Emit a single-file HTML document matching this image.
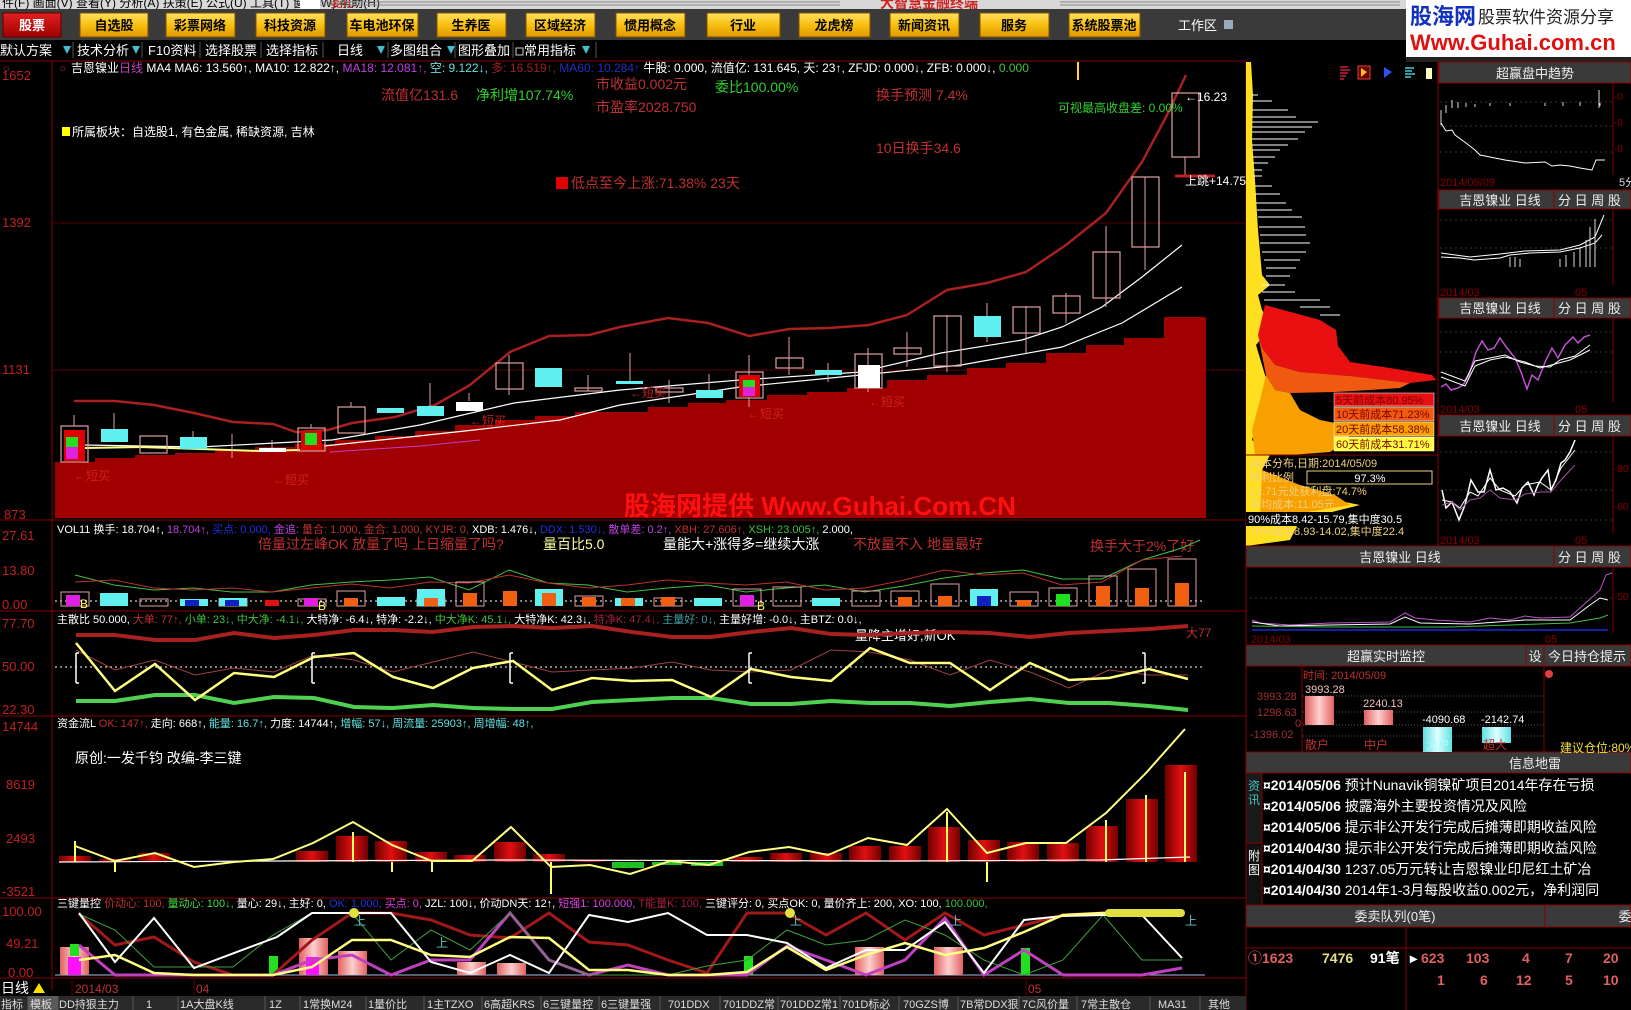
<!DOCTYPE html>
<html><head><meta charset="utf-8"><style>
html,body{margin:0;padding:0;background:#000;width:1631px;height:1010px;overflow:hidden}
svg{display:block}
text{font-family:"Liberation Sans","Noto Sans CJK SC",sans-serif}
.s{font-size:12px}
.m{font-size:13px}
</style></head><body>
<svg width="1631" height="1010" viewBox="0 0 1631 1010" xmlns="http://www.w3.org/2000/svg">
<defs>
<linearGradient id="yb" x1="0" y1="0" x2="0" y2="1"><stop offset="0" stop-color="#ffe060"/><stop offset="0.5" stop-color="#f8c010"/><stop offset="1" stop-color="#e09800"/></linearGradient>
<linearGradient id="rb" x1="0" y1="0" x2="0" y2="1"><stop offset="0" stop-color="#e02020"/><stop offset="1" stop-color="#a00000"/></linearGradient>
<linearGradient id="pk" x1="0" y1="0" x2="1" y2="0"><stop offset="0" stop-color="#e06060"/><stop offset="0.5" stop-color="#ffd0d0"/><stop offset="1" stop-color="#e06060"/></linearGradient>
<linearGradient id="rbar" x1="0" y1="0" x2="1" y2="0"><stop offset="0" stop-color="#700000"/><stop offset="0.5" stop-color="#e01010"/><stop offset="1" stop-color="#700000"/></linearGradient>
<linearGradient id="cy" x1="0" y1="0" x2="1" y2="0"><stop offset="0" stop-color="#60e0e0"/><stop offset="0.5" stop-color="#e0ffff"/><stop offset="1" stop-color="#60e0e0"/></linearGradient>
</defs>
<rect width="1631" height="1010" fill="#000"/>
<!-- top menu -->
<rect x="0" y="0" width="1631" height="9" fill="#d8d8d8"/>
<text x="2" y="7" class="s" fill="#000">件(F)  画面(V)  查看(Y)  分析(A)  扶策(E)  公式(U)  工具(T)  窗口(W)  帮助(H)</text>
<rect x="300" y="0" width="20" height="9" fill="#fff"/>
<text x="330" y="7" class="s" fill="#c00">委托</text>
<g stroke="#888" stroke-width="1"><line x1="320" y1="2" x2="840" y2="2"/><line x1="320" y1="5" x2="840" y2="5"/><line x1="1060" y1="2" x2="1400" y2="2"/><line x1="1060" y1="5" x2="1400" y2="5"/></g>
<text x="880" y="8" font-size="14" fill="#d02020" font-weight="bold">大智慧金融终端</text>
<!-- buttons row -->
<rect x="0" y="9" width="1631" height="31" fill="#3a3a3a"/>
<rect x="3" y="13" width="58" height="24" fill="url(#rb)" stroke="#600" />
<text x="32" y="30" text-anchor="middle" class="m" fill="#fff" font-weight="bold">股票</text>
<g fill="url(#yb)" stroke="#805000">
<rect x="80" y="13" width="68" height="24"/><rect x="166" y="13" width="69" height="24"/><rect x="256" y="13" width="69" height="24"/><rect x="347" y="13" width="71" height="24"/><rect x="437" y="13" width="69" height="24"/><rect x="526" y="13" width="69" height="24"/><rect x="616" y="13" width="69" height="24"/><rect x="707" y="13" width="73" height="24"/><rect x="799" y="13" width="71" height="24"/><rect x="890" y="13" width="69" height="24"/><rect x="980" y="13" width="69" height="24"/><rect x="1069" y="13" width="71" height="24"/>
</g>
<g class="m" fill="#000" font-weight="bold" text-anchor="middle">
<text x="114" y="30">自选股</text><text x="200" y="30">彩票网络</text><text x="290" y="30">科技资源</text><text x="382" y="30">车电池环保</text><text x="471" y="30">生养医</text><text x="560" y="30">区域经济</text><text x="650" y="30">惯用概念</text><text x="743" y="30">行业</text><text x="834" y="30">龙虎榜</text><text x="924" y="30">新闻资讯</text><text x="1014" y="30">服务</text><text x="1104" y="30">系统股票池</text>
</g>
<text x="1178" y="30" class="m" fill="#fff">工作区</text>
<rect x="1224" y="20" width="9" height="9" fill="#9ab"/>
<!-- logo -->
<rect x="1406" y="0" width="225" height="57" fill="#fff"/>
<text x="1410" y="24" font-size="22" font-weight="bold" fill="#1030c0">股海网</text>
<text x="1478" y="23" font-size="17" fill="#222">股票软件资源分享</text>
<text x="1410" y="50" font-size="22" font-weight="bold" fill="#e01010">Www.Guhai.com.cn</text>
<!-- toolbar -->
<rect x="0" y="40" width="1406" height="20" fill="#000"/>
<g class="m" fill="#fff">
<text x="0" y="55">默认方案</text><text x="77" y="55">技术分析</text><text x="148" y="55">F10资料</text><text x="205" y="55">选择股票</text><text x="266" y="55">选择指标</text><text x="337" y="55">日线</text><text x="390" y="55">多图组合</text><text x="458" y="55">图形叠加</text><text x="524" y="55">常用指标</text>
</g>
<g fill="#40c0d0"><path d="M63 46h8l-4 8z"/><path d="M132 46h8l-4 8z"/><path d="M377 46h8l-4 8z"/><path d="M447 46h8l-4 8z"/><path d="M582 46h8l-4 8z"/></g>
<g stroke="#555"><line x1="73" y1="42" x2="73" y2="58"/><line x1="142" y1="42" x2="142" y2="58"/><line x1="200" y1="42" x2="200" y2="58"/><line x1="261" y1="42" x2="261" y2="58"/><line x1="323" y1="42" x2="323" y2="58"/><line x1="388" y1="42" x2="388" y2="58"/><line x1="455" y1="42" x2="455" y2="58"/><line x1="513" y1="42" x2="513" y2="58"/><line x1="596" y1="42" x2="596" y2="58"/></g>
<rect x="516" y="48" width="7" height="7" fill="none" stroke="#ccc"/>
<rect x="1406" y="57" width="225" height="5" fill="#222"/>

<!-- MAIN CHART frame -->
<g stroke="#800" stroke-width="1" fill="none">
<line x1="0" y1="61" x2="1246" y2="61"/>
<line x1="52" y1="61" x2="52" y2="990"/>
<line x1="1246" y1="61" x2="1246" y2="1010"/>
<line x1="0" y1="520" x2="1246" y2="520"/>
<line x1="0" y1="611" x2="1246" y2="611"/>
<line x1="0" y1="716" x2="1246" y2="716"/>
<line x1="0" y1="898" x2="1246" y2="898"/>
<line x1="0" y1="978" x2="1246" y2="978"/>
</g>
<g stroke="#500" stroke-width="1"><line x1="52" y1="223" x2="1246" y2="223"/><line x1="52" y1="370" x2="1246" y2="370"/></g>
<g fill="#c02020" font-size="13">
<text x="2" y="80">1652</text><text x="2" y="227">1392</text><text x="2" y="374">1131</text><text x="4" y="519">873</text>
<text x="2" y="540">27.61</text><text x="2" y="575">13.80</text><text x="2" y="609">0.00</text>
<text x="2" y="628">77.70</text><text x="2" y="671">50.00</text><text x="2" y="714">22.30</text>
<text x="2" y="731">14744</text><text x="6" y="789">8619</text><text x="6" y="843">2493</text><text x="2" y="896">-3521</text>
<text x="2" y="916">100.00</text><text x="6" y="948">49.21</text><text x="8" y="977">0.00</text>
</g>
<!-- red stepped area -->
<path d="M55 520 V462 H95 V458 H135 V455 H175 V453 H215 V450 H255 V447 H295 V444 H335 V440 H375 V436 H415 V431 H455 V425 H495 V420 H535 V416 H575 V412 H620 V412 H648 V407 H688 V403 H726 V400 H767 V395 H807 V392 H847 V388 H887 V380 H927 V375 H967 V368 H1006 V363 H1046 V353 H1086 V345 H1124 V338 H1164 V317 H1206 V518 H55 Z" fill="#a00000"/>
<!-- upper envelope -->
<polyline fill="none" stroke="#a82020" stroke-width="2.5" points="74,401 115,401 154,405 194,413 233,422 273,424 296,432 328,430 352,423 395,417 435,405 470,385 510,352 549,336 589,335 620,327 668,318 708,323 749,336 789,329 829,328 869,325 907,315 947,290 987,283 1026,272 1066,245 1106,213 1142,162 1166,117 1186,75"/>
<!-- MA lines -->
<polyline fill="none" stroke="#fff" stroke-width="1.2" points="83,445 200,447 332,440 420,425 514,403 620,390 740,380 861,372 941,353 1022,340 1062,327 1102,307 1142,277 1182,245"/>
<polyline fill="none" stroke="#fff" stroke-width="1.2" points="324,446 400,438 474,430 560,420 620,405 740,387 861,375 961,365 1062,347 1122,323 1182,287"/>
<polyline fill="none" stroke="#ffff80" stroke-width="2" points="85,448 140,447 200,449 260,451 300,450"/>
<polyline fill="none" stroke="#c040c0" stroke-width="1" points="330,452 420,446 480,440"/>
<!-- candles -->
<g stroke="#e0a0a0" stroke-width="1">
<line x1="74" y1="415" x2="74" y2="426"/><line x1="114" y1="413" x2="114" y2="429"/><line x1="193" y1="431" x2="193" y2="437"/><line x1="232" y1="434" x2="232" y2="458"/><line x1="272" y1="440" x2="272" y2="448"/><line x1="311" y1="424" x2="311" y2="428"/>
<line x1="351" y1="402" x2="351" y2="407"/><line x1="430" y1="383" x2="430" y2="406"/><line x1="469" y1="393" x2="469" y2="401"/><line x1="509" y1="355" x2="509" y2="395"/><line x1="588" y1="375" x2="588" y2="391"/><line x1="630" y1="353" x2="630" y2="383"/>
<line x1="669" y1="380" x2="669" y2="403"/><line x1="709" y1="374" x2="709" y2="390"/><line x1="749" y1="355" x2="749" y2="407"/><line x1="789" y1="337" x2="789" y2="375"/><line x1="828" y1="363" x2="828" y2="382"/><line x1="868" y1="348" x2="868" y2="392"/><line x1="907" y1="332" x2="907" y2="367"/><line x1="947" y1="315" x2="947" y2="372"/><line x1="987" y1="303" x2="987" y2="342"/><line x1="1026" y1="306" x2="1026" y2="353"/><line x1="1066" y1="293" x2="1066" y2="323"/><line x1="1106" y1="226" x2="1106" y2="307"/><line x1="1145" y1="177" x2="1145" y2="270"/><line x1="1185" y1="157" x2="1185" y2="175"/>
</g>
<g fill="none" stroke="#e0a0a0" stroke-width="1.2">
<rect x="61" y="426" width="27" height="36"/><rect x="140" y="436" width="27" height="17"/><rect x="298" y="428" width="27" height="23"/><rect x="338" y="407" width="27" height="26"/><rect x="496" y="363" width="27" height="26"/><rect x="575" y="388" width="27" height="3"/><rect x="656" y="388" width="27" height="4"/><rect x="736" y="372" width="27" height="26"/><rect x="776" y="358" width="27" height="10"/><rect x="855" y="354" width="27" height="34"/><rect x="894" y="348" width="27" height="6"/><rect x="934" y="316" width="27" height="50"/><rect x="1013" y="307" width="27" height="26"/><rect x="1053" y="296" width="27" height="17"/><rect x="1093" y="252" width="27" height="46"/><rect x="1132" y="177" width="27" height="70"/><rect x="1172" y="93" width="27" height="64"/>
</g>
<g fill="#60f0f0"><rect x="101" y="429" width="27" height="13"/><rect x="180" y="437" width="27" height="12"/><rect x="377" y="408" width="27" height="5"/><rect x="417" y="406" width="27" height="10"/><rect x="535" y="368" width="27" height="19"/><rect x="616" y="381" width="27" height="3"/><rect x="696" y="390" width="27" height="8"/><rect x="815" y="370" width="27" height="5"/><rect x="974" y="316" width="27" height="21"/></g>
<g fill="#fff"><rect x="259" y="448" width="27" height="4"/><rect x="456" y="402" width="27" height="9"/><rect x="858" y="365" width="22" height="23"/></g>
<g><rect x="64" y="430" width="21" height="31" fill="#e00000"/><rect x="66" y="437" width="12" height="10" fill="#20e020"/><rect x="66" y="447" width="12" height="12" fill="#e020e0"/>
<rect x="301" y="431" width="21" height="19" fill="#e00000"/><rect x="305" y="433" width="12" height="12" fill="#20e020"/>
<rect x="739" y="375" width="21" height="22" fill="#e00000"/><rect x="743" y="380" width="12" height="7" fill="#20e020"/><rect x="743" y="387" width="12" height="9" fill="#e020e0"/></g>
<line x1="1175" y1="176" x2="1215" y2="176" stroke="#c02020" stroke-width="3"/>
<!-- main chart header -->
<text x="2" y="71" font-size="10" fill="#c03030">☼</text>
<text x="58" y="71" font-size="10" fill="#c03030">☼</text>
<text x="71" y="72" class="s"><tspan fill="#fff">吉恩镍业</tspan><tspan fill="#c040c0">日线</tspan><tspan fill="#fff"> MA4 MA6: 13.560↑, MA10: 12.822↑, </tspan><tspan fill="#c040e0">MA18: 12.081↑, </tspan><tspan fill="#60e0e0">空: 9.122↓, </tspan><tspan fill="#a02020">多: 16.519↑, </tspan><tspan fill="#2030c0">MA60: 10.284↑</tspan><tspan fill="#fff"> 牛股: 0.000, 流值亿: 131.645, 天: 23↑, ZFJD: 0.000↓, ZFB: 0.000↓, </tspan><tspan fill="#40c040">0.000</tspan></text>
<line x1="1078" y1="62" x2="1078" y2="80" stroke="#ffd040" stroke-width="2"/>
<g font-size="14">
<text x="381" y="100" fill="#c03030">流值亿131.6</text><text x="476" y="100" fill="#30d030">净利增107.74%</text>
<text x="596" y="89" fill="#c03030">市收益0.002元</text><text x="596" y="112" fill="#c03030">市盈率2028.750</text>
<text x="715" y="92" fill="#30d030">委比100.00%</text>
<text x="876" y="100" fill="#c03030">换手预测 7.4%</text>
<text x="876" y="153" fill="#c03030">10日换手34.6</text>
<rect x="556" y="177" width="12" height="12" fill="#e00000"/>
<text x="571" y="188" fill="#c03030">低点至今上涨:71.38%  23天</text>
</g>
<text x="1058" y="112" class="s" fill="#30d030">可视最高收盘差: 0.00%</text>
<text x="1185" y="101" class="s" fill="#fff">←16.23</text>
<text x="1185" y="185" class="s" fill="#fff">上跳+14.75</text>
<rect x="62" y="127" width="8" height="9" fill="#ffff00"/>
<text x="72" y="136" class="s" fill="#fff">所属板块：自选股1, 有色金属, 稀缺资源, 吉林</text>
<g class="s" fill="#d02020"><text x="74" y="480">←短买</text><text x="273" y="484">←短买</text><text x="470" y="425">←短买</text><text x="748" y="418">←短买</text><text x="869" y="406">←短买</text><text x="630" y="397">←短买</text></g>
<text x="624" y="515" font-size="26" font-weight="bold" fill="#ff1010">股海网提供 Www.Guhai.Com.CN</text>

<!-- VOL panel -->
<text x="57" y="533" font-size="11"><tspan fill="#fff">VOL11 换手: 18.704↑, </tspan><tspan fill="#c040e0">18.704↑, </tspan><tspan fill="#2030e0">买点: 0.000, </tspan><tspan fill="#c040e0">金追: </tspan><tspan fill="#c03030">量合: 1.000, 金合: 1.000, KYJR: 0, </tspan><tspan fill="#fff">XDB: 1.476↓, </tspan><tspan fill="#2030e0">DDX: 1.530↓, </tspan><tspan fill="#c040e0">散单差: 0.2↑, </tspan><tspan fill="#c03030">XBH: 27.606↑, </tspan><tspan fill="#40c040">XSH: 23.005↑, </tspan><tspan fill="#fff">2.000,</tspan></text>
<g font-size="14"><text x="258" y="549" fill="#c03030">倍量过左峰OK 放量了吗 上日缩量了吗?</text><text x="543" y="549" fill="#ffffa0">量百比5.0</text><text x="663" y="549" fill="#fff">量能大+涨得多=继续大涨</text><text x="853" y="549" fill="#c03030">不放量不入 地量最好</text><text x="1090" y="551" fill="#c03030">换手大于2%了好</text></g>
<line x1="55" y1="601" x2="1205" y2="601" stroke="#fff" stroke-dasharray="2,3"/>
<polyline fill="none" stroke="#40c040" points="75,575 114,585 154,590 193,588 232,592 272,592 311,585 351,582 390,580 430,577 469,590 509,570 548,583 588,585 627,592 667,588 707,585 746,592 786,588 825,585 865,592 904,586 944,578 983,573 1023,570 1062,579 1102,579 1142,560 1182,548 1200,540"/>
<polyline fill="none" stroke="#c03030" points="75,582 114,580 154,588 193,590 232,588 272,592 311,588 351,584 390,588 430,582 469,583 509,575 548,583 588,588 627,585 667,580 707,583 746,585 786,582 825,590 865,588 904,580 944,570 983,575 1023,573 1062,585 1102,582 1142,560 1182,556"/>
<g fill="none" stroke="#e0a0a0"><rect x="61" y="592" width="28" height="14"/><rect x="140" y="599" width="28" height="7"/><rect x="219" y="599" width="28" height="7"/><rect x="298" y="599" width="28" height="7"/><rect x="337" y="591" width="28" height="15"/><rect x="417" y="598" width="28" height="8"/><rect x="456" y="582" width="28" height="24"/><rect x="575" y="596" width="28" height="10"/><rect x="654" y="598" width="28" height="8"/><rect x="733" y="589" width="28" height="17"/><rect x="773" y="587" width="28" height="19"/><rect x="852" y="591" width="28" height="15"/><rect x="891" y="591" width="28" height="15"/><rect x="931" y="584" width="28" height="22"/><rect x="1010" y="592" width="28" height="14"/><rect x="1049" y="588" width="28" height="18"/><rect x="1089" y="576" width="28" height="30"/><rect x="1128" y="569" width="28" height="37"/><rect x="1168" y="559" width="28" height="47"/></g>
<g fill="#60f0f0"><rect x="100" y="593" width="28" height="13"/><rect x="180" y="599" width="28" height="7"/><rect x="219" y="598" width="28" height="8"/><rect x="377" y="597" width="28" height="9"/><rect x="417" y="589" width="28" height="17"/><rect x="535" y="589" width="28" height="17"/><rect x="615" y="598" width="28" height="8"/><rect x="694" y="598" width="28" height="8"/><rect x="812" y="598" width="28" height="8"/><rect x="970" y="589" width="28" height="17"/></g>
<g fill="#f06010"><rect x="344" y="598" width="14" height="8"/><rect x="424" y="598" width="14" height="8"/><rect x="463" y="593" width="14" height="13"/><rect x="503" y="591" width="14" height="15"/><rect x="542" y="593" width="14" height="13"/><rect x="582" y="597" width="14" height="9"/><rect x="621" y="598" width="14" height="8"/><rect x="661" y="597" width="14" height="9"/><rect x="898" y="597" width="14" height="9"/><rect x="938" y="596" width="14" height="10"/><rect x="1017" y="600" width="14" height="6"/><rect x="1096" y="586" width="14" height="20"/><rect x="1135" y="588" width="14" height="18"/><rect x="1175" y="583" width="14" height="23"/></g>
<rect x="66" y="595" width="14" height="11" fill="#e020e0"/><rect x="304" y="598" width="14" height="8" fill="#e020e0"/><rect x="740" y="595" width="14" height="11" fill="#e020e0"/>
<rect x="225" y="600" width="14" height="6" fill="#1020c0"/><rect x="977" y="596" width="14" height="10" fill="#1020c0"/><rect x="185" y="600" width="14" height="6" fill="#1020c0"/>
<rect x="265" y="600" width="14" height="6" fill="#e01010"/><rect x="1056" y="594" width="14" height="12" fill="#20e020"/>
<g class="s" fill="#ffff60"><text x="80" y="608">B</text><text x="318" y="610">B</text><text x="757" y="610">B</text></g>

<!-- 主散比 panel -->
<text x="57" y="623" font-size="11"><tspan fill="#fff">主散比 50.000, </tspan><tspan fill="#c03030">大单: 77↑, </tspan><tspan fill="#40c040">小单: 23↓, 中大净: -4.1↓, </tspan><tspan fill="#fff">大特净: -6.4↓, 特净: -2.2↓, </tspan><tspan fill="#40c040">中大净K: 45.1↓, </tspan><tspan fill="#fff">大特净K: 42.3↓, </tspan><tspan fill="#a02040">特净K: 47.4↓, </tspan><tspan fill="#40a0a0">主量好: 0↓, </tspan><tspan fill="#fff">主量好增: -0.0↓, 主BTZ: 0.0↓,</tspan></text>
<text x="855" y="640" font-size="13" fill="#fff">量降主增好,新OK</text>
<text x="1186" y="637" font-size="12" fill="#c03030">大77</text>
<line x1="55" y1="667" x2="1205" y2="667" stroke="#fff" stroke-dasharray="2,3"/>
<polyline fill="none" stroke="#a82020" stroke-width="4" points="76,635 115,635 155,640 195,640 234,633 274,638 314,635 354,630 393,630 433,632 473,627 513,626 552,628 592,626 632,632 672,637 711,637 751,632 791,628 831,634 870,635 910,633 950,632 990,633 1030,637 1069,633 1109,631 1149,629 1188,626"/>
<polyline fill="none" stroke="#50d050" stroke-width="4" points="76,701 115,701 155,695 195,695 234,703 274,697 314,698 354,707 393,708 433,705 473,708 513,709 552,709 592,702 632,700 672,698 711,698 751,704 791,704 831,701 870,703 910,703 950,706 990,702 1030,699 1069,703 1109,703 1149,706 1188,710"/>
<polyline fill="none" stroke="#a04040" points="76,650 115,670 155,660 195,675 234,668 274,672 314,655 354,660 393,672 433,662 473,652 513,662 552,672 592,670 632,668 672,662 711,670 751,672 791,670 831,650 870,652 910,660 950,675 990,660 1030,672 1069,688 1109,670 1149,675 1188,675"/>
<polyline fill="none" stroke="#ffff80" stroke-width="2.5" points="76,643 115,691 155,664 195,700 234,673 274,677 314,657 354,653 393,677 433,688 473,668 513,661 552,690 592,678 632,681 672,680 711,697 751,669 791,677 831,681 870,648 910,663 950,663 990,690 1030,663 1069,680 1109,678 1149,669 1188,679"/>
<g stroke="#fff" stroke-width="1.5" fill="none"><path d="M76 653v30M76 653h3M76 683h3"/><path d="M312 653v30M312 653h3M312 683h3"/><path d="M510 653v30M510 653h3M510 683h3"/><path d="M749 653v30M749 653h3M749 683h3"/><path d="M1145 653v30M1145 653h-3M1145 683h-3"/></g>

<!-- 资金流 panel -->
<text x="57" y="727" font-size="11"><tspan fill="#fff">资金流L </tspan><tspan fill="#c03030">OK: 147↑, </tspan><tspan fill="#fff">走向: 668↑, </tspan><tspan fill="#60e0e0">能量: 16.7↑, </tspan><tspan fill="#fff">力度: 14744↑, </tspan><tspan fill="#60e0e0">增幅: 57↓, 周流量: 25903↑, 周增幅: 48↑,</tspan></text>
<text x="75" y="763" font-size="14" fill="#fff">原创:一发千钧 改编-李三键</text>
<g fill="url(#rbar)">
<rect x="59" y="856" width="32" height="6"/><rect x="99" y="859" width="32" height="3"/><rect x="138" y="853" width="32" height="9"/><rect x="296" y="851" width="32" height="11"/><rect x="336" y="836" width="32" height="26"/><rect x="375" y="841" width="32" height="21"/><rect x="415" y="852" width="32" height="10"/><rect x="454" y="855" width="32" height="7"/><rect x="494" y="842" width="32" height="20"/><rect x="533" y="854" width="32" height="8"/><rect x="573" y="860" width="32" height="2"/><rect x="731" y="857" width="32" height="5"/><rect x="770" y="853" width="32" height="9"/><rect x="810" y="853" width="32" height="9"/><rect x="849" y="846" width="32" height="16"/><rect x="889" y="846" width="32" height="16"/><rect x="928" y="827" width="32" height="35"/><rect x="968" y="840" width="32" height="22"/><rect x="1007" y="842" width="32" height="20"/><rect x="1047" y="843" width="32" height="19"/><rect x="1086" y="826" width="32" height="36"/><rect x="1126" y="799" width="32" height="63"/><rect x="1165" y="765" width="32" height="97"/>
</g>
<rect x="612" y="862" width="32" height="6" fill="#20c020"/><rect x="652" y="862" width="30" height="3" fill="#20c020"/><rect x="691" y="862" width="32" height="4" fill="#20c020"/>
<polyline fill="none" stroke="#fff" stroke-width="1.2" points="59,862 500,860 900,861 1100,860 1160,858 1190,857"/>
<polyline fill="none" stroke="#ffff80" stroke-width="2" points="75,846 115,861 155,853 194,867 234,862 273,859 313,843 353,822 392,845 432,861 472,861 511,827 551,867 590,865 630,874 670,861 709,865 749,852 789,847 828,855 868,838 907,845 947,809 987,853 1026,843 1066,843 1106,813 1146,773 1185,729"/>
<g stroke="#ffff60" stroke-width="2"><line x1="75" y1="841" x2="75" y2="862"/><line x1="115" y1="862" x2="115" y2="872"/><line x1="353" y1="832" x2="353" y2="862"/><line x1="392" y1="862" x2="392" y2="872"/><line x1="432" y1="862" x2="432" y2="872"/><line x1="551" y1="862" x2="551" y2="894"/><line x1="947" y1="812" x2="947" y2="862"/><line x1="987" y1="862" x2="987" y2="882"/><line x1="1106" y1="820" x2="1106" y2="862"/><line x1="1146" y1="795" x2="1146" y2="862"/><line x1="1185" y1="772" x2="1185" y2="862"/></g>

<!-- 三键量控 panel -->
<text x="57" y="907" font-size="11"><tspan fill="#fff">三键量控 </tspan><tspan fill="#c03030">价动心: 100, </tspan><tspan fill="#40e040">量动心: 100↓, </tspan><tspan fill="#fff">量心: 29↓, 主好: 0, </tspan><tspan fill="#2030e0">OK: 1.000, </tspan><tspan fill="#e040e0">买点: 0, </tspan><tspan fill="#fff">JZL: 100↓, 价动DN天: 12↑, </tspan><tspan fill="#e040e0">短强1: 100.000, </tspan><tspan fill="#a02040">T能量K: 100, </tspan><tspan fill="#fff">三键评分: 0, 买点OK: 0, 量价齐上: 200, XO: 100, </tspan><tspan fill="#40c040">100.000,</tspan></text>
<line x1="55" y1="975" x2="1205" y2="975" stroke="#a0c0e0"/>
<g fill="url(#pk)"><rect x="60" y="947" width="29" height="28"/><rect x="299" y="938" width="29" height="37"/><rect x="338" y="951" width="29" height="24"/><rect x="457" y="962" width="29" height="13"/><rect x="497" y="963" width="29" height="12"/><rect x="855" y="947" width="29" height="28"/><rect x="934" y="947" width="29" height="28"/></g>
<g fill="#20e020"><rect x="70" y="944" width="9" height="12"/><rect x="269" y="956" width="9" height="19"/><rect x="744" y="956" width="9" height="19"/><rect x="1021" y="948" width="9" height="27"/></g>
<g fill="#ff10ff"><rect x="68" y="957" width="13" height="18"/><rect x="306" y="957" width="13" height="18"/></g>
<polyline fill="none" stroke="#a01818" stroke-width="3" points="79,914 115,945 154,937 194,962 233,975 273,975 312,940 352,913 391,913 431,920 470,935 510,938 549,913 589,942 628,945 668,960 707,973 747,913 787,913 826,935 866,913 905,940 945,913 984,935 1024,925 1063,915 1103,913 1142,913"/>
<polyline fill="none" stroke="#c040c0" stroke-width="3" points="79,945 115,975 154,975 194,975 233,975 273,975 312,960 352,955 391,975 431,960 470,960 510,913 549,960 589,975 628,965 668,975 707,975 747,975 787,946 826,960 866,975 905,960 945,918 984,975 1024,950 1063,975 1103,975 1142,975 1182,968"/>
<polyline fill="none" stroke="#40a040" points="79,914 115,930 154,967 194,967 233,967 273,935 312,913 352,913 391,960 431,930 470,950 510,913 549,960 589,975 628,975 668,975 707,966 747,960 787,930 826,945 866,940 905,920 945,935 984,960 1024,975 1063,960 1103,915 1142,960 1182,960"/>
<polyline fill="none" stroke="#fff" stroke-width="2" points="79,913 115,962 154,918 194,968 277,937 312,913 352,913 391,913 431,962 470,973 510,955 549,973 589,915 628,922 668,913 707,935 747,935 787,943 826,968 866,950 905,950 945,922 984,973 1024,920 1063,916 1103,915 1142,915 1182,958"/>
<polyline fill="none" stroke="#ffff80" stroke-width="2.5" points="79,960 115,955 154,973 194,975 273,975 312,967 352,940 391,940 431,955 470,957 510,937 549,938 589,970 628,970 668,975 707,975 747,972 787,947 826,970 866,955 905,943 945,955 984,948 1024,932 1063,915 1103,913 1142,913 1182,913"/>
<rect x="1105" y="909" width="80" height="8" rx="4" fill="#e0e040"/>
<circle cx="354" cy="913" r="5" fill="#e0e040"/><circle cx="790" cy="913" r="5" fill="#e0e040"/>
<g class="s" fill="#60c0c0"><text x="354" y="925">上</text><text x="436" y="947">上</text><text x="790" y="925">上</text><text x="950" y="925">上</text><text x="1185" y="925">上</text></g>

<!-- date row & tabs -->
<text x="1" y="993" font-size="14" fill="#fff">日线</text>
<path d="M33 993 l6 -10 l6 10z" fill="#ffe000"/>
<g class="s" fill="#c03030"><text x="75" y="993">2014/03</text><text x="196" y="993">04</text><text x="1028" y="993">05</text></g>
<g stroke="#600"><line x1="72" y1="979" x2="72" y2="995"/><line x1="194" y1="979" x2="194" y2="995"/><line x1="1026" y1="979" x2="1026" y2="995"/></g>
<rect x="0" y="996" width="1246" height="14" fill="#2a2a2a"/>
<rect x="28" y="996" width="30" height="14" fill="#5a5a5a"/>
<g font-size="11" fill="#ddd">
<text x="1" y="1008">指标</text><text x="30" y="1008">模板</text><text x="59" y="1008">DD持狠主力</text><text x="146" y="1008">1</text><text x="180" y="1008">1A大盘K线</text><text x="269" y="1008">1Z</text><text x="303" y="1008">1常换M24</text><text x="368" y="1008">1量价比</text><text x="427" y="1008">1主TZXO</text><text x="484" y="1008">6高超KRS</text><text x="543" y="1008">6三键量控</text><text x="601" y="1008">6三键量强</text><text x="668" y="1008">701DDX</text><text x="723" y="1008">701DDZ常</text><text x="780" y="1008">701DDZ常1</text><text x="842" y="1008">701D标必</text><text x="903" y="1008">70GZS博</text><text x="960" y="1008">7B常DDX狠</text><text x="1022" y="1008">7C风价量</text><text x="1081" y="1008">7常主散仓</text><text x="1158" y="1008">MA31</text><text x="1208" y="1008">其他</text>
</g>
<g stroke="#555"><line x1="28" y1="996" x2="28" y2="1010"/><line x1="58" y1="996" x2="58" y2="1010"/><line x1="133" y1="996" x2="133" y2="1010"/><line x1="178" y1="996" x2="178" y2="1010"/><line x1="265" y1="996" x2="265" y2="1010"/><line x1="300" y1="996" x2="300" y2="1010"/><line x1="366" y1="996" x2="366" y2="1010"/><line x1="424" y1="996" x2="424" y2="1010"/><line x1="482" y1="996" x2="482" y2="1010"/><line x1="541" y1="996" x2="541" y2="1010"/><line x1="599" y1="996" x2="599" y2="1010"/><line x1="660" y1="996" x2="660" y2="1010"/><line x1="720" y1="996" x2="720" y2="1010"/><line x1="778" y1="996" x2="778" y2="1010"/><line x1="840" y1="996" x2="840" y2="1010"/><line x1="899" y1="996" x2="899" y2="1010"/><line x1="958" y1="996" x2="958" y2="1010"/><line x1="1019" y1="996" x2="1019" y2="1010"/><line x1="1077" y1="996" x2="1077" y2="1010"/><line x1="1150" y1="996" x2="1150" y2="1010"/><line x1="1200" y1="996" x2="1200" y2="1010"/></g>

<!-- RIGHT: chip distribution -->
<line x1="1438" y1="61" x2="1438" y2="546" stroke="#800"/>
<path d="M1246 62 H1251 L1253 95 L1252 140 L1255 180 L1258 230 L1262 275 L1270 285 L1258 295 L1262 310 L1272 325 L1256 345 L1262 365 L1268 385 L1262 400 L1258 420 L1252 440 L1270 455 L1262 470 L1272 480 L1300 495 L1335 500 L1360 505 L1340 510 L1300 520 L1290 540 L1246 546 Z" fill="#ffe020"/>
<path d="M1265 305 L1320 320 L1336 330 L1338 346 L1350 362 L1390 368 L1432 375 L1436 380 L1410 383 L1350 376 L1300 372 L1275 365 L1262 348 L1258 335 Z" fill="#e81010"/>
<path d="M1258 335 L1262 348 L1275 365 L1300 372 L1350 376 L1410 383 L1400 388 L1370 390 L1335 392 L1290 393 L1275 390 L1266 375 Z" fill="#f05a10"/>
<path d="M1266 375 L1275 390 L1290 393 L1300 410 L1320 420 L1345 425 L1350 440 L1330 452 L1290 455 L1255 455 L1252 430 L1260 400 Z" fill="#f8a000"/>
<path d="M1262 470 L1300 485 L1335 495 L1350 505 L1320 510 L1290 515 L1260 520 Z" fill="#f8a000"/>
<g stroke="#fff" stroke-width="1">
<line x1="1252" y1="95" x2="1258" y2="95"/><line x1="1252" y1="101" x2="1272" y2="101"/><line x1="1252" y1="110" x2="1288" y2="110"/><line x1="1252" y1="117" x2="1296" y2="117"/><line x1="1252" y1="122" x2="1318" y2="122"/><line x1="1252" y1="127" x2="1312" y2="127"/><line x1="1252" y1="132" x2="1305" y2="132"/><line x1="1252" y1="139" x2="1298" y2="139"/><line x1="1252" y1="145" x2="1288" y2="145"/><line x1="1252" y1="150" x2="1280" y2="150"/><line x1="1252" y1="157" x2="1275" y2="157"/><line x1="1252" y1="163" x2="1268" y2="163"/><line x1="1253" y1="170" x2="1262" y2="170"/><line x1="1253" y1="176" x2="1262" y2="176"/><line x1="1255" y1="186" x2="1272" y2="186"/><line x1="1255" y1="194" x2="1280" y2="194"/><line x1="1256" y1="203" x2="1286" y2="203"/><line x1="1257" y1="210" x2="1292" y2="210"/><line x1="1258" y1="217" x2="1302" y2="217"/><line x1="1259" y1="227" x2="1305" y2="227"/><line x1="1260" y1="235" x2="1306" y2="235"/><line x1="1260" y1="243" x2="1310" y2="243"/><line x1="1262" y1="252" x2="1306" y2="252"/><line x1="1264" y1="260" x2="1300" y2="260"/><line x1="1266" y1="268" x2="1296" y2="268"/><line x1="1266" y1="276" x2="1290" y2="276"/><line x1="1262" y1="285" x2="1285" y2="285"/><line x1="1262" y1="292" x2="1295" y2="292"/><line x1="1264" y1="300" x2="1320" y2="300"/><line x1="1300" y1="307" x2="1330" y2="307"/><line x1="1320" y1="315" x2="1340" y2="315"/></g>
<g><rect x="1334" y="393" width="100" height="13" fill="#e81010" stroke="#fff" stroke-width="0.5"/><rect x="1334" y="407" width="100" height="14" fill="#f05a10" stroke="#fff" stroke-width="0.5"/><rect x="1334" y="422" width="100" height="14" fill="#f8a000" stroke="#fff" stroke-width="0.5"/><rect x="1334" y="437" width="100" height="14" fill="#ffff40" stroke="#fff" stroke-width="0.5"/></g>
<g font-size="11" fill="#800000"><text x="1336" y="404">5天前成本80.95%</text><text x="1336" y="418">10天前成本71.23%</text><text x="1336" y="433">20天前成本58.38%</text><text x="1336" y="448">60天前成本31.71%</text></g>
<line x1="1246" y1="455" x2="1438" y2="455" stroke="#800"/>
<g font-size="11" fill="#f0d080"><text x="1250" y="467">成本分布,日期:2014/05/09</text><text x="1250" y="481">获利比例</text><text x="1250" y="495">12.71元处获利盘:74.7%</text><text x="1250" y="508">平均成本:11.05元</text><text x="1250" y="535">70%成本8.93-14.02,集中度22.4</text></g>
<rect x="1307" y="471" width="125" height="13" fill="#000" stroke="#f0d080"/>
<text x="1370" y="482" font-size="11" fill="#fff" text-anchor="middle">97.3%</text>
<rect x="1246" y="512" width="160" height="14" fill="#000"/>
<text x="1248" y="523" font-size="11" fill="#fff">90%成本8.42-15.79,集中度30.5</text>
<!-- icons -->
<g><path d="M1340 67h8M1340 70h10M1340 73h8M1340 76h6M1340 79h4" stroke="#d02040" stroke-width="1.5"/><rect x="1358" y="66" width="12" height="13" fill="#600" stroke="#e04040"/><path d="M1361 68l6 4-6 5z" fill="#ffc000"/><path d="M1384 67l8 5-8 6z" fill="#3050f0"/><path d="M1405 68h9M1405 71h7M1405 74h10M1405 77h6" stroke="#40d0d0" stroke-width="1.5"/><rect x="1426" y="68" width="6" height="11" fill="#ffffc0"/></g>

<!-- right mini charts -->
<g fill="#3a3a3a" stroke="#800">
<rect x="1439" y="62" width="192" height="21"/>
<rect x="1439" y="190" width="192" height="19"/>
<rect x="1439" y="298" width="192" height="20"/>
<rect x="1439" y="415" width="192" height="21"/>
<rect x="1246" y="546" width="385" height="21"/>
<rect x="1246" y="645" width="385" height="21"/>
<rect x="1246" y="752" width="385" height="21"/>
<rect x="1246" y="905" width="385" height="22"/>
</g>
<g stroke="#800"><line x1="1554" y1="190" x2="1554" y2="209"/><line x1="1554" y1="298" x2="1554" y2="318"/><line x1="1554" y1="415" x2="1554" y2="436"/><line x1="1554" y1="546" x2="1554" y2="567"/><line x1="1526" y1="645" x2="1526" y2="666"/><line x1="1544" y1="645" x2="1544" y2="752"/><line x1="1545" y1="905" x2="1545" y2="927"/><line x1="1613" y1="83" x2="1613" y2="175"/><line x1="1613" y1="209" x2="1613" y2="285"/><line x1="1613" y1="318" x2="1613" y2="402"/><line x1="1613" y1="436" x2="1613" y2="533"/><line x1="1613" y1="567" x2="1613" y2="633"/></g>
<g font-size="13" fill="#eee" text-anchor="middle"><text x="1535" y="78">超赢盘中趋势</text><text x="1500" y="205">吉恩镍业 日线</text><text x="1500" y="313">吉恩镍业 日线</text><text x="1500" y="431">吉恩镍业 日线</text><text x="1400" y="562">吉恩镍业 日线</text><text x="1386" y="661">超赢实时监控</text><text x="1587" y="661">今日持仓提示</text><text x="1535" y="768">信息地雷</text><text x="1395" y="921">委卖队列(0笔)</text><text x="1625" y="921">委</text><text x="1535" y="661">设</text></g>
<g font-size="13" fill="#eee"><text x="1558" y="205">分 日 周 股</text><text x="1558" y="313">分 日 周 股</text><text x="1558" y="431">分 日 周 股</text><text x="1558" y="562">分 日 周 股</text></g>
<g font-size="11" fill="#800"><text x="1440" y="186">2014/05/09</text><text x="1440" y="296">2014/03</text><text x="1575" y="296">05</text><text x="1440" y="413">2014/03</text><text x="1575" y="413">05</text><text x="1440" y="544">2014/03</text><text x="1575" y="544">05</text><text x="1251" y="643">2014/03</text><text x="1545" y="643">05</text></g>
<text x="1619" y="186" font-size="11" fill="#ddd">5分</text>
<g stroke="#333" stroke-dasharray="2,3"><line x1="1440" y1="102" x2="1613" y2="102"/><line x1="1440" y1="126" x2="1613" y2="126"/><line x1="1440" y1="152" x2="1613" y2="152"/><line x1="1440" y1="220" x2="1613" y2="220"/><line x1="1440" y1="248" x2="1613" y2="248"/><line x1="1440" y1="332" x2="1613" y2="332"/><line x1="1440" y1="352" x2="1613" y2="352"/><line x1="1440" y1="372" x2="1613" y2="372"/><line x1="1440" y1="452" x2="1613" y2="452"/><line x1="1440" y1="490" x2="1613" y2="490"/><line x1="1440" y1="520" x2="1613" y2="520"/><line x1="1250" y1="598" x2="1613" y2="598"/></g>
<path d="M1441 110v15M1446 105v8M1452 100v8M1458 102v6M1466 103v4M1475 104v3M1490 103v3M1510 103v3M1545 103v3M1563 102v4M1580 102v4M1600 103v3M1599 90v18" stroke="#ddd"/>
<polyline fill="none" stroke="#fff" points="1441,123 1446,131 1452,130 1455,135 1466,143 1475,150 1480,155 1485,156 1505,160 1525,163 1545,162 1552,166 1560,165 1570,166 1580,168 1592,170 1596,160 1605,160"/>
<polyline fill="none" stroke="#fff" points="1441,257 1460,258 1474,260 1500,258 1510,255 1530,253 1560,252 1580,248 1595,243 1602,235"/>
<polyline fill="none" stroke="#fff" points="1441,253 1470,257 1500,254 1525,251 1560,250 1580,245 1595,237 1604,215"/>
<path d="M1510 267v-10M1515 267v-10M1520 267v-8M1560 267v-8M1566 267v-12M1574 267v-15M1580 267v-20M1586 267v-27M1590 267v-40M1595 267v-48" stroke="#ddd"/>
<polyline fill="none" stroke="#c050d0" stroke-width="1.5" points="1441,387 1446,384 1451,390 1458,388 1463,385 1469,375 1476,352 1482,341 1488,350 1494,348 1500,338 1507,348 1515,358 1521,372 1527,389 1532,375 1538,380 1546,360 1552,348 1558,358 1565,345 1573,337 1578,343 1584,337 1590,335"/>
<polyline fill="none" stroke="#fff" points="1441,372 1465,381 1475,361 1490,358 1505,355 1520,362 1535,366 1550,367 1560,360 1575,356 1590,345"/>
<polyline fill="none" stroke="#fff" points="1441,377 1465,386 1475,366 1490,360 1505,357 1525,362 1540,368 1555,364 1570,360 1590,350"/>
<polyline fill="none" stroke="#fff" stroke-width="1.5" points="1442,490 1446,508 1452,502 1459,520 1465,505 1471,480 1478,492 1484,492 1490,470 1496,490 1503,488 1510,492 1517,503 1522,488 1528,482 1534,495 1538,485 1542,478 1548,470 1551,490 1556,480 1561,463 1565,460 1570,452 1575,440"/>
<polyline fill="none" stroke="#fff" points="1442,500 1452,502 1460,508 1470,492 1478,496 1490,478 1500,490 1515,496 1525,485 1540,482 1551,490 1561,468 1575,450"/>
<polyline fill="none" stroke="#a050a0" points="1442,505 1452,502 1460,510 1470,500 1480,498 1490,490 1500,498 1515,500 1525,494 1540,492 1551,492 1561,480 1575,465"/>
<polyline fill="none" stroke="#c050d0" points="1252,620 1260,623 1290,625 1330,623 1390,622 1405,613 1415,618 1435,620 1470,622 1490,618 1510,620 1525,616 1540,618 1570,617 1600,590 1606,575 1612,573"/>
<polyline fill="none" stroke="#fff" points="1252,622 1280,626 1330,625 1390,624 1405,617 1420,623 1470,624 1525,620 1570,620 1590,605 1600,598 1608,600"/>
<polyline fill="none" stroke="#40c040" points="1252,626 1330,627 1450,627 1570,623 1600,618 1608,615"/>
<line x1="1252" y1="630" x2="1608" y2="630" stroke="#1020a0" stroke-width="2"/>
<g font-size="10" fill="#800"><text x="1614" y="100">-0</text><text x="1614" y="126">-0</text><text x="1614" y="152">-0</text><text x="1614" y="600">-50</text><text x="1614" y="472">-80</text><text x="1614" y="510">-60</text></g>

<!-- monitor -->
<text x="1303" y="679" font-size="11" fill="#c03030">时间: 2014/05/09</text>
<g font-size="11" fill="#a03030"><text x="1257" y="700">3993.28</text><text x="1257" y="716">1298.63</text><text x="1295" y="727">0</text><text x="1250" y="738">-1396.02</text></g>
<line x1="1302" y1="664" x2="1302" y2="752" stroke="#800"/>
<g stroke="#555" stroke-dasharray="1,2"><line x1="1303" y1="696" x2="1544" y2="696"/><line x1="1303" y1="712" x2="1544" y2="712"/><line x1="1303" y1="725" x2="1544" y2="725"/><line x1="1303" y1="736" x2="1544" y2="736"/></g>
<rect x="1305" y="696" width="29" height="29" fill="url(#pk)"/><rect x="1364" y="710" width="29" height="15" fill="url(#pk)"/><rect x="1423" y="727" width="29" height="25" fill="url(#cy)"/><rect x="1482" y="727" width="29" height="16" fill="url(#cy)"/>
<g font-size="11" fill="#f0c0c0"><text x="1305" y="693">3993.28</text><text x="1363" y="707">2240.13</text></g>
<g font-size="11" fill="#fff"><text x="1422" y="723">-4090.68</text><text x="1481" y="723">-2142.74</text></g>
<g font-size="12" fill="#c03030"><text x="1305" y="749">散户</text><text x="1364" y="749">中户</text><text x="1426" y="749" fill="#a0ffff">大户</text><text x="1483" y="749">超大</text></g>
<circle cx="1549" cy="674" r="4" fill="#e04040"/>
<text x="1560" y="752" font-size="12" fill="#f0e040">建议仓位:80%</text>
<!-- news -->
<rect x="1246" y="773" width="16" height="70" fill="#1a1a1a" stroke="#800"/>
<rect x="1246" y="843" width="16" height="62" fill="#111" stroke="#800"/>
<text x="1248" y="790" font-size="12" fill="#40c0c0">资</text><text x="1248" y="804" font-size="12" fill="#40c0c0">讯</text>
<text x="1248" y="860" font-size="12" fill="#fff">附</text><text x="1248" y="874" font-size="12" fill="#fff">图</text>
<g font-size="14" fill="#fff"><text x="1263" y="790"><tspan font-weight="bold">¤2014/05/06</tspan> 预计Nunavik铜镍矿项目2014年存在亏损</text><text x="1263" y="811"><tspan font-weight="bold">¤2014/05/06</tspan> 披露海外主要投资情况及风险</text><text x="1263" y="832"><tspan font-weight="bold">¤2014/05/06</tspan> 提示非公开发行完成后摊薄即期收益风险</text><text x="1263" y="853"><tspan font-weight="bold">¤2014/04/30</tspan> 提示非公开发行完成后摊薄即期收益风险</text><text x="1263" y="874"><tspan font-weight="bold">¤2014/04/30</tspan> 1237.05万元转让吉恩镍业印尼红土矿冶</text><text x="1263" y="895"><tspan font-weight="bold">¤2014/04/30</tspan> 2014年1-3月每股收益0.002元，净利润同</text></g>
<line x1="1246" y1="948" x2="1631" y2="948" stroke="#800"/>
<line x1="1406" y1="927" x2="1406" y2="1010" stroke="#800"/>
<g font-size="14" font-weight="bold"><text x="1248" y="963" fill="#e06060">①1623</text><text x="1322" y="963" fill="#e0e080">7476</text><text x="1370" y="963" fill="#fff">91笔</text><text x="1410" y="963" fill="#fff">▸</text><text x="1421" y="963" fill="#e06060">623</text><text x="1466" y="963" fill="#e06060">103</text><text x="1522" y="963" fill="#e06060">4</text><text x="1565" y="963" fill="#e06060">7</text><text x="1603" y="963" fill="#e06060">20</text><text x="1437" y="985" fill="#e06060">1</text><text x="1480" y="985" fill="#e06060">6</text><text x="1516" y="985" fill="#e06060">12</text><text x="1565" y="985" fill="#e06060">5</text><text x="1603" y="985" fill="#e06060">10</text></g>
</svg>
</body></html>
